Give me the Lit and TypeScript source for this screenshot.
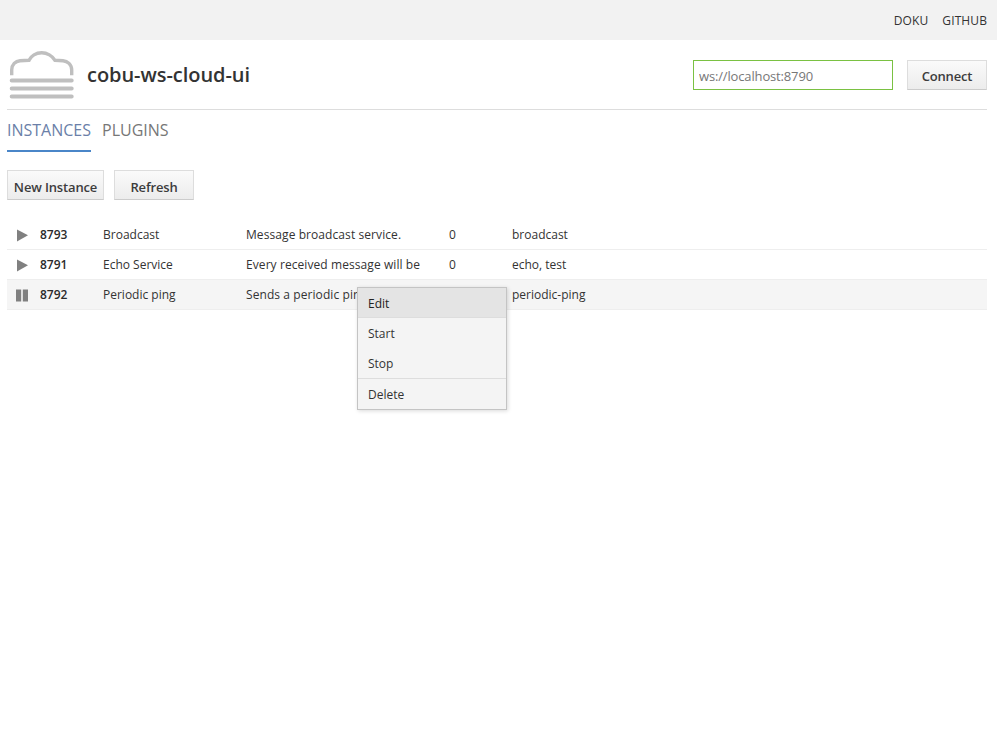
import { LitElement, html, css } from 'lit';
import { customElement } from 'lit/decorators.js';

interface Instance {
  port: number;
  name: string;
  description: string;
  clients: number;
  tags: string;
  running: boolean;
}

const INSTANCES: Instance[] = [
  { port: 8793, name: 'Broadcast', description: 'Message broadcast service.', clients: 0, tags: 'broadcast', running: false },
  { port: 8791, name: 'Echo Service', description: 'Every received message will be echoed', clients: 0, tags: 'echo, test', running: false },
  { port: 8792, name: 'Periodic ping', description: 'Sends a periodic ping message', clients: 0, tags: 'periodic-ping', running: true },
];

@customElement('app-root')
export class AppRoot extends LitElement {
  static styles = css`
    :host {
      display: block;
      min-height: 740px;
      background: #fff;
      color: #333;
      font-family: 'Open Sans', sans-serif;
      font-size: 12px;
    }

    .topbar {
      display: flex;
      justify-content: flex-end;
      align-items: center;
      gap: 14px;
      height: 40px;
      padding: 0 10px 0 7px;
      background: #f2f2f2;
    }
    .topbar a {
      color: #333;
      text-decoration: none;
      letter-spacing: 0.1px;
    }

    .page {
      padding: 0 10px 0 7px;
    }

    .header {
      display: flex;
      align-items: center;
      height: 69px;
      border-bottom: 1px solid #ddd;
    }
    .logo {
      display: block;
      width: 68px;
      height: 50px;
      margin-left: 2px;
      margin-top: 1px;
    }
    h1 {
      margin: 0 0 0 10px;
      font-size: 20px;
      font-weight: 600;
      letter-spacing: -0.05px;
      color: #333;
      flex: 1;
    }
    .url {
      box-sizing: border-box;
      width: 200px;
      height: 30px;
      padding: 2px 5px 0;
      border: 1px solid #7ac142;
      outline: none;
      font-family: inherit;
      font-size: 13px;
      letter-spacing: -0.15px;
      color: #777;
      margin-right: 14px;
    }
    .btn {
      box-sizing: border-box;
      height: 30px;
      padding: 3px 0 0;
      border: 1px solid #ddd;
      border-bottom-color: #ccc;
      background: linear-gradient(#fafafa, #ececec);
      font-family: inherit;
      font-size: 13px;
      font-weight: 600;
      letter-spacing: -0.15px;
      color: #3c3c3c;
    }
    .connect { width: 80px; }
    .new { width: 97px; }
    .refresh { width: 80px; }

    .tabs {
      display: flex;
      gap: 11px;
      height: 42px;
    }
    .tab {
      box-sizing: border-box;
      height: 42px;
      padding-top: 9px;
      font-size: 16px;
      line-height: 22px;
      color: #777;
    }
    .tab.active {
      color: #6b7fa8;
      border-bottom: 2px solid #4a86c8;
    }

    .actions {
      display: flex;
      gap: 10px;
      margin-top: 18px;
    }

    .list {
      margin-top: 20px;
    }
    .row {
      display: grid;
      grid-template-columns: 33px 63px 143px 203px 63px 1fr;
      align-items: center;
      box-sizing: border-box;
      height: 30px;
      border-bottom: 1px solid #eee;
    }
    .row.open {
      background: #f5f5f5;
    }
    .cell {
      white-space: nowrap;
      overflow: hidden;
    }
    .desc {
      height: 16px;
      line-height: 16px;
      padding-right: 10px;
      overflow: hidden;
      letter-spacing: 0.08px;
    }
    .port {
      font-weight: 600;
      color: #2a2a2a;
    }
    .state {
      display: block;
      width: 14px;
      height: 14px;
      margin-left: 9px;
      fill: #808080;
    }

    .menu-anchor {
      position: relative;
    }
    .menu {
      position: absolute;
      left: 350px;
      top: -23px;
      box-sizing: border-box;
      width: 150px;
      background: #f4f4f4;
      border: 1px solid #c4c4c4;
      box-shadow: 1px 1px 4px rgba(0, 0, 0, 0.15);
    }
    .item {
      box-sizing: border-box;
      height: 30px;
      line-height: 30px;
      padding: 1px 0 0 10px;
      color: #333;
    }
    .item.hot {
      background: #e4e4e4;
      color: #222;
      border-bottom: 1px solid #ddd;
    }
    .item.last {
      height: 31px;
      border-top: 1px solid #ddd;
    }
  `;

  private stateIcon(running: boolean) {
    return running
      ? html`<svg class="state" viewBox="0 0 14 14"><path d="M0 1.500h5.200v12H0zM6.800 1.500H12v12H6.800z"/></svg>`
      : html`<svg class="state" viewBox="0 0 14 14"><path d="M1 1.500L12 7.300 1 13.500z"/></svg>`;
  }

  render() {
    return html`
      <nav class="topbar"><a href="#">DOKU</a><a href="#">GITHUB</a></nav>
      <div class="page">
        <header class="header">
          <svg class="logo" viewBox="0 0 68 50" fill="none" stroke="#bfbfbf">
            <path stroke-width="3.400" d="M2.700 25.300V20C2.700 14.500 6.500 11 11 10.700C14 10.500 17.500 10.500 20 10.300C22 6 27 2.700 32.700 2.700C38 2.700 43.500 6 46 10.300C48 10.500 51 10.500 54 10.700C58.500 11 62.700 14.500 62.700 20V25.300"/>
            <path stroke-width="4" stroke-linecap="round" d="M2.700 30.500h60M2.700 38.500h60M2.700 46.500h60"/>
          </svg>
          <h1>cobu-ws-cloud-ui</h1>
          <input class="url" .value=${'ws://localhost:8790'} />
          <button class="btn connect">Connect</button>
        </header>
        <div class="tabs">
          <div class="tab active">INSTANCES</div>
          <div class="tab">PLUGINS</div>
        </div>
        <div class="actions">
          <button class="btn new">New Instance</button>
          <button class="btn refresh">Refresh</button>
        </div>
        <div class="list">
          ${INSTANCES.map(
            i => html`
              <div class="row ${i.running ? 'open' : ''}">
                <span class="cell">${this.stateIcon(i.running)}</span>
                <span class="cell port">${i.port}</span>
                <span class="cell">${i.name}</span>
                <span class="desc">${i.description}</span>
                <span class="cell">${i.clients}</span>
                <span class="cell">${i.tags}</span>
              </div>
            `
          )}
          <div class="menu-anchor">
            <div class="menu">
              <div class="item hot">Edit</div>
              <div class="item">Start</div>
              <div class="item">Stop</div>
              <div class="item last">Delete</div>
            </div>
          </div>
        </div>
      </div>
    `;
  }
}
